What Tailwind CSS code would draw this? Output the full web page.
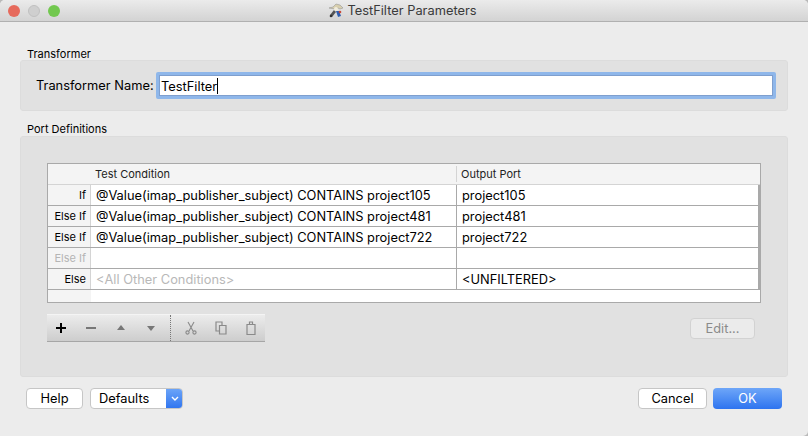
<!DOCTYPE html>
<html lang="en">
  <head>
    <meta charset="UTF-8" />
    <title>TestFilter Parameters</title>
    <script src="https://cdn.jsdelivr.net/npm/@tailwindcss/browser@4"></script>
  </head>
  <body class="bg-[#b9b9b9] font-['Inter',sans-serif] text-[12.85px] text-black overflow-hidden">
    <div class="w-[808px] h-[436px] bg-[#ececec] rounded-t-[5px] rounded-br-[5px] overflow-hidden">
      <!-- Title bar -->
      <div class="relative h-[22px] pr-[3px] flex items-center justify-center gap-[3px] bg-gradient-to-b from-[#ebebeb] to-[#d3d3d3] border-b border-[#b0b0b0] text-[#3a3a3a]">
        <div class="absolute left-[8px] top-[5px] flex gap-[8px]">
          <span class="w-[12px] h-[12px] rounded-full bg-[#e66a5c]"></span>
          <span class="w-[12px] h-[12px] rounded-full bg-[#cfcfcf] border border-[#c0c0c0]"></span>
          <span class="w-[12px] h-[12px] rounded-full bg-[#72c84f]"></span>
        </div>
        <svg class="w-[16px] h-[16px]" viewBox="0 0 16 16">
          <path d="M1 5l4-1 3-3 4 1 3 3-3 1-2-1-3 1z" fill="#d8cfae" stroke="#8a8a8a" stroke-width=".5" />
          <path d="M6 7l-4 5 2 2 4-5z" fill="#555" />
          <path d="M8 8l2 6 3-1-2-5z" fill="#2f5fb0" />
          <circle cx="8" cy="6" r="2" fill="#f1ecdc" />
          <circle cx="12" cy="9" r="1.300" fill="#c94a3a" />
          <circle cx="3" cy="13" r="1.300" fill="#333" />
        </svg>
        <span>TestFilter Parameters</span>
      </div>

      <div class="px-[20px]">
        <!-- Transformer group -->
        <div class="pt-[25px] h-[38px] pl-[7px] text-[11px] leading-[14px]">Transformer</div>
        <div class="h-[51px] flex items-center pl-[15px] pr-[11px] bg-[#e1e1e1] border border-[#dcdcdc] rounded-[3px]">
          <span class="w-[120px] whitespace-nowrap">Transformer Name:</span>
          <div class="flex-1 h-[27px] flex items-center bg-white border-[3px] border-[#8fb7ea] rounded-[2px] outline outline-1 -outline-offset-4 outline-[#7f9fce]">
            <span class="pl-[2px] pt-[1px] leading-[19px]">TestFilter</span>
            <span class="w-px h-[16px] bg-black"></span>
          </div>
        </div>

        <!-- Port Definitions group -->
        <div class="mt-[12px] h-[13px] pl-[7px] text-[11px] leading-[13px]">Port Definitions</div>
        <div class="h-[241px] px-[26px] pt-[26px] bg-[#e1e1e1] border border-[#dcdcdc] rounded-[3px]">
          <!-- Table -->
          <div class="w-[714px] h-[140px] border border-[#a9a9a9] bg-[#f4f4f4]">
            <div class="grid grid-cols-[43px_365px_1fr] auto-rows-[20px] h-[21px] border-b border-[#d4d4d4] text-[11px] leading-[20px] text-[#222]">
              <div></div>
              <div class="pl-[4px]">Test Condition</div>
              <div class="pl-[4px] my-[2px] leading-[16px] border-l border-[#d4d4d4]">Output Port</div>
            </div>
            <div class="grid grid-cols-[43px_365px_1fr] auto-rows-[20px] h-[21px] border-b border-[#a9a9a9] leading-[21px]">
              <div class="text-right pr-[4px] text-[11px] border-r border-[#d4d4d4]">If</div>
              <div class="bg-white pl-[5px]">@Value(imap_publisher_subject) CONTAINS project105</div>
              <div class="bg-white pl-[5px] border-l border-[#a9a9a9] border-r-2 border-r-[#a9a9a9]">project105</div>
            </div>
            <div class="grid grid-cols-[43px_365px_1fr] auto-rows-[20px] h-[21px] border-b border-[#a9a9a9] leading-[21px]">
              <div class="text-right pr-[4px] text-[11px] border-r border-[#d4d4d4]">Else If</div>
              <div class="bg-white pl-[5px]">@Value(imap_publisher_subject) CONTAINS project481</div>
              <div class="bg-white pl-[5px] border-l border-[#a9a9a9] border-r-2 border-r-[#a9a9a9]">project481</div>
            </div>
            <div class="grid grid-cols-[43px_365px_1fr] auto-rows-[20px] h-[21px] border-b border-[#a9a9a9] leading-[21px]">
              <div class="text-right pr-[4px] text-[11px] border-r border-[#d4d4d4]">Else If</div>
              <div class="bg-white pl-[5px]">@Value(imap_publisher_subject) CONTAINS project722</div>
              <div class="bg-white pl-[5px] border-l border-[#a9a9a9] border-r-2 border-r-[#a9a9a9]">project722</div>
            </div>
            <div class="grid grid-cols-[43px_365px_1fr] auto-rows-[20px] h-[21px] border-b border-[#a9a9a9] leading-[21px]">
              <div class="text-right pr-[4px] text-[11px] text-[#b5b5b5] border-r border-[#d4d4d4]">Else If</div>
              <div class="bg-white"></div>
              <div class="bg-white border-l border-[#a9a9a9] border-r-2 border-r-[#a9a9a9]"></div>
            </div>
            <div class="grid grid-cols-[43px_365px_1fr] auto-rows-[20px] h-[21px] border-b border-[#a9a9a9] leading-[21px]">
              <div class="text-right pr-[4px] text-[11px] border-r border-[#d4d4d4]">Else</div>
              <div class="bg-white pl-[5px] text-[#b8b8b8]">&lt;All Other Conditions&gt;</div>
              <div class="bg-white pl-[5px] border-l border-[#a9a9a9] border-r-2 border-r-[#a9a9a9]">&lt;UNFILTERED&gt;</div>
            </div>
            <div class="grid grid-cols-[43px_1fr] h-[12px]">
              <div></div>
              <div class="bg-white"></div>
            </div>
          </div>

          <!-- Toolbar and Edit -->
          <div class="flex justify-between mt-[11px]">
            <div class="w-[218px] h-[28px] flex items-center bg-gradient-to-b from-[#ececec] to-[#cdcdcd] border-t border-[#f4f4f4] border-b border-b-[#a6a6a6]">
              <svg class="ml-[8px] w-[12px] h-[12px]" viewBox="0 0 12 12"><path d="M5 1h2v4h4v2H7v4H5V7H1V5h4z" fill="#000" /></svg>
              <svg class="ml-[18px] w-[12px] h-[12px]" viewBox="0 0 12 12"><path d="M1 5h10v2H1z" fill="#777" /></svg>
              <svg class="ml-[18px] w-[12px] h-[12px]" viewBox="0 0 12 12"><path d="M6 3l4 5H2z" fill="#777" /></svg>
              <svg class="ml-[18px] w-[12px] h-[12px]" viewBox="0 0 12 12"><path d="M2 4h8L6 9z" fill="#777" /></svg>
              <div class="ml-[13px] w-0 h-[26px] border-l border-dotted border-[#777]"></div>
              <svg class="ml-[14px] w-[12px] h-[14px]" viewBox="0 0 12 14" fill="none" stroke="#8a8a8a" stroke-width="1.1"><path d="M3 1l5 9M9 1L4 10" /><circle cx="2.500" cy="11.500" r="1.600" /><circle cx="9.500" cy="11.500" r="1.600" /></svg>
              <svg class="ml-[18px] w-[12px] h-[14px]" viewBox="0 0 12 14" fill="none" stroke="#8a8a8a" stroke-width="1.2"><path d="M7 4V1H1v9h3" /><path d="M4.500 4.500h6.500v8.500H4.500z" /></svg>
              <svg class="ml-[18px] w-[12px] h-[14px]" viewBox="0 0 12 14" fill="none" stroke="#8a8a8a" stroke-width="1.2"><path d="M2 3.500h8v10H2z" /><path d="M4.500 3V1h3v2" /></svg>
            </div>
            <div class="mt-[4px] mr-[6px] w-[65px] h-[21px] text-center leading-[19px] text-[#8a8a8a] bg-[#ebebeb] border border-[#d2d2d2] rounded-[4px]">Edit...</div>
          </div>
        </div>

        <!-- Footer buttons -->
        <div class="flex items-start mt-[11px] mx-[6px] leading-[19px]">
          <div class="w-[57px] h-[21px] text-center bg-white border border-[#c6c6c6] rounded-[4px]">Help</div>
          <div class="ml-[7px] w-[93px] h-[21px] flex bg-white border border-[#c6c6c6] rounded-[4px] overflow-hidden">
            <span class="flex-1 pl-[8px]">Defaults</span>
            <span class="w-[17px] -my-px -mr-px flex items-center justify-center bg-gradient-to-b from-[#6ea6f8] to-[#2d73ef]">
              <svg class="w-[8px] h-[6px]" viewBox="0 0 8 6" fill="none" stroke="#fff" stroke-width="1.4"><path d="M1 1l3 3 3-3" /></svg>
            </span>
          </div>
          <div class="ml-auto w-[69px] h-[21px] text-center bg-white border border-[#c6c6c6] rounded-[4px]">Cancel</div>
          <div class="ml-[6px] w-[69px] h-[21px] text-center text-white bg-gradient-to-b from-[#6ea6f8] to-[#2d73ef] rounded-[4px] leading-[21px]">OK</div>
        </div>
      </div>
    </div>
  </body>
</html>
